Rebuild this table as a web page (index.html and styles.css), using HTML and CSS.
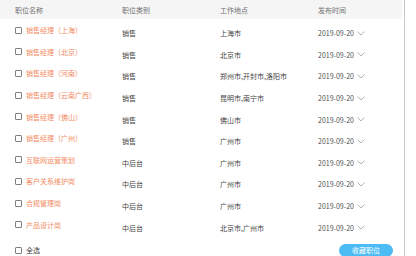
FILE: index.html
```html
<!DOCTYPE html>
<html lang="zh">
<head>
<meta charset="utf-8">
<link rel="stylesheet" href="styles.css">
</head>
<body>
<div class="page">
  <div class="panel">
    <div class="thead cols">
      <span>职位名称</span><span>职位类别</span><span>工作地点</span><span>发布时间</span>
    </div>
    <div class="body">
    <div class="row cols"><label class="name"><i class="box"></i><span>销售经理（上海）</span></label><span class="cell">销售</span><span class="cell">上海市</span><span class="cell date">2019-09-20<svg class="chev" viewBox="0 0 8 5"><path d="M0.5 0.5 L4 4 L7.5 0.5"/></svg></span></div>
    <div class="row cols"><label class="name"><i class="box"></i><span>销售经理（北京）</span></label><span class="cell">销售</span><span class="cell">北京市</span><span class="cell date">2019-09-20<svg class="chev" viewBox="0 0 8 5"><path d="M0.5 0.5 L4 4 L7.5 0.5"/></svg></span></div>
    <div class="row cols"><label class="name"><i class="box"></i><span>销售经理（河南）</span></label><span class="cell">销售</span><span class="cell">郑州市,开封市,洛阳市</span><span class="cell date">2019-09-20<svg class="chev" viewBox="0 0 8 5"><path d="M0.5 0.5 L4 4 L7.5 0.5"/></svg></span></div>
    <div class="row cols"><label class="name"><i class="box"></i><span>销售经理（云南广西）</span></label><span class="cell">销售</span><span class="cell">昆明市,南宁市</span><span class="cell date">2019-09-20<svg class="chev" viewBox="0 0 8 5"><path d="M0.5 0.5 L4 4 L7.5 0.5"/></svg></span></div>
    <div class="row cols"><label class="name"><i class="box"></i><span>销售经理（佛山）</span></label><span class="cell">销售</span><span class="cell">佛山市</span><span class="cell date">2019-09-20<svg class="chev" viewBox="0 0 8 5"><path d="M0.5 0.5 L4 4 L7.5 0.5"/></svg></span></div>
    <div class="row cols"><label class="name"><i class="box"></i><span>销售经理（广州）</span></label><span class="cell">销售</span><span class="cell">广州市</span><span class="cell date">2019-09-20<svg class="chev" viewBox="0 0 8 5"><path d="M0.5 0.5 L4 4 L7.5 0.5"/></svg></span></div>
    <div class="row cols"><label class="name"><i class="box"></i><span>互联网运营策划</span></label><span class="cell">中后台</span><span class="cell">广州市</span><span class="cell date">2019-09-20<svg class="chev" viewBox="0 0 8 5"><path d="M0.5 0.5 L4 4 L7.5 0.5"/></svg></span></div>
    <div class="row cols"><label class="name"><i class="box"></i><span>客户关系维护岗</span></label><span class="cell">中后台</span><span class="cell">广州市</span><span class="cell date">2019-09-20<svg class="chev" viewBox="0 0 8 5"><path d="M0.5 0.5 L4 4 L7.5 0.5"/></svg></span></div>
    <div class="row cols"><label class="name"><i class="box"></i><span>合规管理岗</span></label><span class="cell">中后台</span><span class="cell">广州市</span><span class="cell date">2019-09-20<svg class="chev" viewBox="0 0 8 5"><path d="M0.5 0.5 L4 4 L7.5 0.5"/></svg></span></div>
    <div class="row cols"><label class="name"><i class="box"></i><span>产品设计岗</span></label><span class="cell">中后台</span><span class="cell">北京市,广州市</span><span class="cell date">2019-09-20<svg class="chev" viewBox="0 0 8 5"><path d="M0.5 0.5 L4 4 L7.5 0.5"/></svg></span></div>
    </div>
    <div class="footer">
      <label class="all"><i class="box"></i><span>全选</span></label>
      <button class="fav">收藏职位</button>
    </div>
  </div>
  <div class="rail"></div>
</div>
</body>
</html>
```

FILE: styles.css
```css
html, body {
  margin: 0;
  padding: 0;
  background: #fff;
}
body {
  font-family: "Noto Sans CJK SC", "Noto Sans", sans-serif;
  font-size: 7px;
  color: #444;
  width: 416px;
  height: 256px;
  overflow: hidden;
}
.page {
  display: flex;
  height: 256px;
}
.panel {
  width: 402px;
  display: flex;
  flex-direction: column;
}
.rail {
  width: 1px;
  margin-left: 2px;
  background: #c8c8c8;
}
.cols {
  display: grid;
  grid-template-columns: 107px 98px 98px 1fr;
  padding-left: 15px;
  align-items: center;
}
.thead {
  height: 19px;
  padding-top: 1px;
  box-sizing: border-box;
  background: #f5f5f5;
  color: #707070;
}
.body {
  padding-top: 3px;
}
.row {
  height: 21.6px;
}
.name {
  display: flex;
  align-items: center;
  gap: 4px;
  color: #f28a62;
  margin-bottom: 5px;
  white-space: nowrap;
}
.box {
  display: block;
  width: 5px;
  height: 5px;
  border: 1px solid #808080;
  border-radius: 1px;
  flex: none;
}
.cell {
  white-space: nowrap;
  margin-top: 1px;
}
.date {
  display: flex;
  align-items: center;
  color: #505050;
}
.chev {
  width: 8px;
  height: 5px;
  margin-left: 3px;
  fill: none;
  stroke: #a0a0a0;
  stroke-width: 0.8;
}
.footer {
  flex: 1;
  display: flex;
  align-items: flex-end;
  justify-content: space-between;
  padding-left: 15px;
  padding-right: 9px;
}
.all {
  display: flex;
  align-items: center;
  gap: 4px;
  margin-bottom: 1px;
}
.fav {
  width: 54px;
  height: 13px;
  margin-bottom: -1px;
  border: 0;
  border-radius: 7px;
  background: #4dbcf4;
  color: #fff;
  font: inherit;
  font-size: 7px;
  padding: 0;
  line-height: 13px;
}
```
